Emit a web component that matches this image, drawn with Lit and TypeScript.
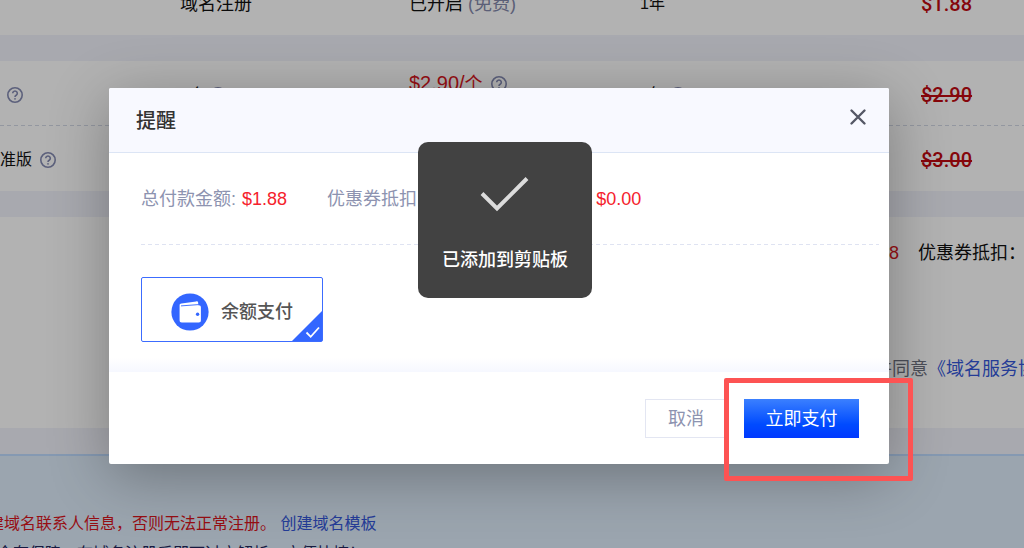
import { LitElement, html, css } from "lit";
import { customElement } from "lit/decorators.js";

@customElement("help-icon")
class HelpIcon extends LitElement {
  static styles = css`
    :host { display: inline-flex; flex: none; color: #858bb2; }
    svg { display: block; }
  `;
  render() {
    return html`<svg width="16" height="16" viewBox="0 0 16 16" fill="none" stroke="currentColor">
      <circle cx="8" cy="8" r="7.2" stroke-width="1.6" />
      <path d="M5.7 6.3a2.3 2.3 0 1 1 3.5 2c-.8.5-1.2.8-1.2 1.7" stroke-width="1.6" />
      <circle cx="8" cy="11.9" r=".5" stroke-width="1" />
    </svg>`;
  }
}

@customElement("order-page")
class OrderPage extends LitElement {
  static styles = css`
    :host { display: block; overflow: hidden; }
    .card { background: #fff; }
    .gap { height: 26px; background: #f1f3fb; }
    .row {
      display: grid;
      grid-template-columns: 180fr 229fr 231fr 281fr 103fr;
      align-items: center;
      box-sizing: border-box;
      height: 65px;
      padding-top: 2px;
      font-size: 18px;
      line-height: 26px;
      color: #111;
      white-space: nowrap;
    }
    .row > * { min-width: 0; }
    .first { height: 35px; padding: 0; align-items: start; }
    .first > * { margin-top: -9px; }
    .dashed {
      background: repeating-linear-gradient(90deg, #d3d8e6 0 4px, transparent 4px 7px) bottom / 100% 1px no-repeat;
    }
    .inline { display: flex; align-items: center; gap: 8px; }
    .small { font-size: 16px; }
    .term { font-size: 16px; gap: 5px; }
    .lead { padding-left: 7px; }
    .muted { color: #8388ab; }
    .red { color: #d8151c; }
    .stack { display: grid; line-height: 22px; }
    .unit { font-size: 20px; }
    .unit small { font-size: 18px; }
    .price { font: 500 20px/26px Roboto, sans-serif; color: #c00a10; }
    del { text-decoration-thickness: 2px; }
    .summary {
      display: flex;
      flex-direction: column;
      justify-content: space-between;
      height: 211px;
      box-sizing: border-box;
      padding: 23px 0 46px;
      font-size: 18px;
      line-height: 26px;
      white-space: nowrap;
      color: #111;
    }
    .totals, .terms { display: grid; grid-template-columns: minmax(0, 918fr) minmax(0, 106fr); }
    .totals > :first-child { text-align: right; padding-right: 19px; }
    .terms { grid-template-columns: minmax(0, 928fr) minmax(0, 96fr); }
    .terms > :first-child { text-align: right; color: #6e7280; }
    a { color: #3457d8; text-decoration: none; }
    .notice {
      height: 94px;
      box-sizing: border-box;
      border-top: 2px solid #bfdcff;
      background: #deecfb;
      padding-top: 53px;
      font-size: 16px;
      line-height: 30px;
      white-space: nowrap;
      overflow: hidden;
    }
    .notice p { margin: 0 0 0 -12px; }
    .notice .navy { margin-left: -19px; color: #23265c; }
  `;
  render() {
    return html`
      <section class="card">
        <div class="row first">
          <span></span><span>域名注册</span>
          <span>已开启 <span class="muted">(免费)</span></span>
          <span class="term">1年</span><span class="price">$1.88</span>
        </div>
      </section>
      <div class="gap"></div>
      <section class="card">
        <div class="row dashed">
          <span class="inline lead"><help-icon></help-icon></span>
          <span class="inline term">1个 <help-icon></help-icon></span>
          <span class="stack">
            <span class="inline red"><span class="unit">$2.90/<small>个</small></span><help-icon></help-icon></span>
            <span class="muted">(优惠价)</span>
          </span>
          <span class="inline term">1年 <help-icon></help-icon></span>
          <del class="price">$2.90</del>
        </div>
        <div class="row">
          <span class="inline small">准版 <help-icon></help-icon></span>
          <span></span><span></span><span></span>
          <del class="price">$3.00</del>
        </div>
      </section>
      <div class="gap"></div>
      <section class="card summary">
        <div class="totals"><span class="red">$1.88</span><span>优惠券抵扣：</span></div>
        <div class="terms"><span>并同意</span><a href="#terms">《域名服务协议》</a></div>
      </section>
      <div class="gap"></div>
      <section class="notice">
        <p><span class="red">建域名联系人信息，否则无法正常注册。</span> <a href="#template">创建域名模板</a></p>
        <p class="navy">安全有保障，在域名注册后即可过户解析，方便快捷！</p>
      </section>
    `;
  }
}

@customElement("pay-dialog")
class PayDialog extends LitElement {
  static styles = css`
    :host {
      display: block;
      position: relative;
      width: 780px;
      max-width: 90%;
      border-radius: 2px;
      background: #fff;
      box-shadow: 0 12px 60px rgba(0, 0, 0, 0.3);
      font-size: 18px;
      line-height: 26px;
    }
    header {
      display: flex;
      align-items: center;
      justify-content: space-between;
      height: 64px;
      padding: 0 22px 0 27px;
      border-bottom: 1px solid #dce5f5;
      border-radius: 2px 2px 0 0;
      background: #f8f9ff;
    }
    h2 { margin: 0; padding-top: 2px; font-size: 20px; font-weight: 500; color: #333; }
    button { font: inherit; cursor: pointer; padding: 0; }
    .close { border: 0; background: none; width: 18px; height: 18px; margin-bottom: 6px; }
    svg { display: block; }
    .body {
      height: 219px;
      box-sizing: border-box;
      padding: 33px 10px 0 32px;
      background: linear-gradient(#fff, #f6f8ff) bottom / 100% 14px no-repeat;
    }
    .amounts {
      display: flex;
      gap: 40px;
      margin: 0;
      padding-bottom: 33px;
      background: repeating-linear-gradient(90deg, #dfe3f2 0 4px, transparent 4px 7px) bottom / 100% 1px no-repeat;
      white-space: nowrap;
    }
    .amounts div { display: flex; gap: 6px; }
    dt { color: #8d93b0; }
    dd { margin: 0; color: #f5222d; }
    .method {
      position: relative;
      display: inline-flex;
      align-items: center;
      gap: 12px;
      height: 65px;
      width: 182px;
      box-sizing: border-box;
      margin-top: 32px;
      padding: 5px 0 0 29px;
      border: 1px solid #3c6cff;
      border-radius: 2px;
      font-weight: 500;
      color: #555;
    }
    .method input { position: absolute; opacity: 0; margin: 0; }
    .corner { position: absolute; right: 0; bottom: 0; }
    footer {
      display: flex;
      justify-content: flex-end;
      gap: 17px;
      padding: 27px 30px 26px;
    }
    footer button { height: 39px; }
    .cancel { width: 82px; border: 1px solid #e3e6f2; background: #fff; color: #8d93b0; }
    .pay { width: 115px; border: 0; background: linear-gradient(#3b80ff, #004bff 65%, #0038ff); color: #fff; }
    .mark {
      position: absolute;
      right: -24px;
      bottom: -17px;
      width: 179px;
      height: 93px;
      border: 5px solid #fd5353;
      border-radius: 2px;
      pointer-events: none;
    }
  `;
  render() {
    return html`
      <header>
        <h2>提醒</h2>
        <button class="close" aria-label="关闭">
          <svg width="18" height="18" viewBox="0 0 18 18" stroke="#555866" stroke-width="2.4" stroke-linecap="round">
            <path d="M2.5 2.5l13 13M15.5 2.5l-13 13" />
          </svg>
        </button>
      </header>
      <div class="body">
        <dl class="amounts">
          <div><dt>总付款金额:</dt><dd>$1.88</dd></div>
          <div><dt>优惠券抵扣:</dt><dd>$1.88</dd></div>
          <div><dt>应付金额:</dt><dd>$0.00</dd></div>
        </dl>
        <label class="method">
          <input type="radio" name="method" checked />
          <svg width="38" height="38" viewBox="0 0 38 38">
            <circle cx="19" cy="19" r="18.6" fill="#3366ff" />
            <path d="M8.6 12.4c0-1.2.6-1.7 1.8-1.9l14.8-2.1c1.3-.2 2 .4 2 1.6v2.200h.4c1.600 0 2.300.7 2.300 2.200v12.800c0 1.500-.7 2.200-2.200 2.200H10.800c-1.500 0-2.200-.7-2.200-2.200z" fill="#fff" />
            <path d="M10 12.900l17.500-1.300" stroke="#3366ff" stroke-width=".9" />
            <circle cx="26.600" cy="21.300" r="1.700" fill="#3366ff" />
          </svg>
          <span>余额支付</span>
          <svg class="corner" width="30" height="30" viewBox="0 0 30 30">
            <path d="M30 0v30H0z" fill="#3366ff" />
            <path d="M14.500 21.500l4.200 4.300 8.300-9.300" fill="none" stroke="#fff" stroke-width="1.800" />
          </svg>
        </label>
      </div>
      <footer>
        <button class="cancel">取消</button>
        <button class="pay">立即支付</button>
      </footer>
      <div class="mark"></div>
    `;
  }
}

@customElement("app-root")
class AppRoot extends LitElement {
  static styles = css`
    :host {
      display: block;
      position: relative;
      height: 100vh;
      overflow: hidden;
      font-family: "Liberation Sans", "Noto Sans CJK SC", sans-serif;
    }
    .overlay {
      position: absolute;
      inset: 0;
      box-sizing: border-box;
      display: flex;
      justify-content: center;
      align-items: flex-start;
      padding: 88px 26px 0 0;
      background: rgba(0, 0, 0, 0.3);
    }
    .toast {
      position: absolute;
      top: 142px;
      left: 50%;
      margin-left: -94px;
      width: 174px;
      height: 156px;
      box-sizing: border-box;
      padding: 34px 0 24px;
      display: flex;
      flex-direction: column;
      align-items: center;
      justify-content: space-between;
      border-radius: 10px;
      background: #424242;
      color: #fff;
      font-size: 18px;
      line-height: 28px;
      font-weight: 500;
    }
  `;
  render() {
    return html`
      <order-page></order-page>
      <div class="overlay">
        <pay-dialog role="dialog" aria-label="提醒"></pay-dialog>
        <div class="toast" role="status">
          <svg width="50" height="36" viewBox="0 0 50 36" fill="none" stroke="#dcdcdc" stroke-width="4">
            <path d="M2 17.500L17 32.500L47 2.500" />
          </svg>
          已添加到剪贴板
        </div>
      </div>
    `;
  }
}
